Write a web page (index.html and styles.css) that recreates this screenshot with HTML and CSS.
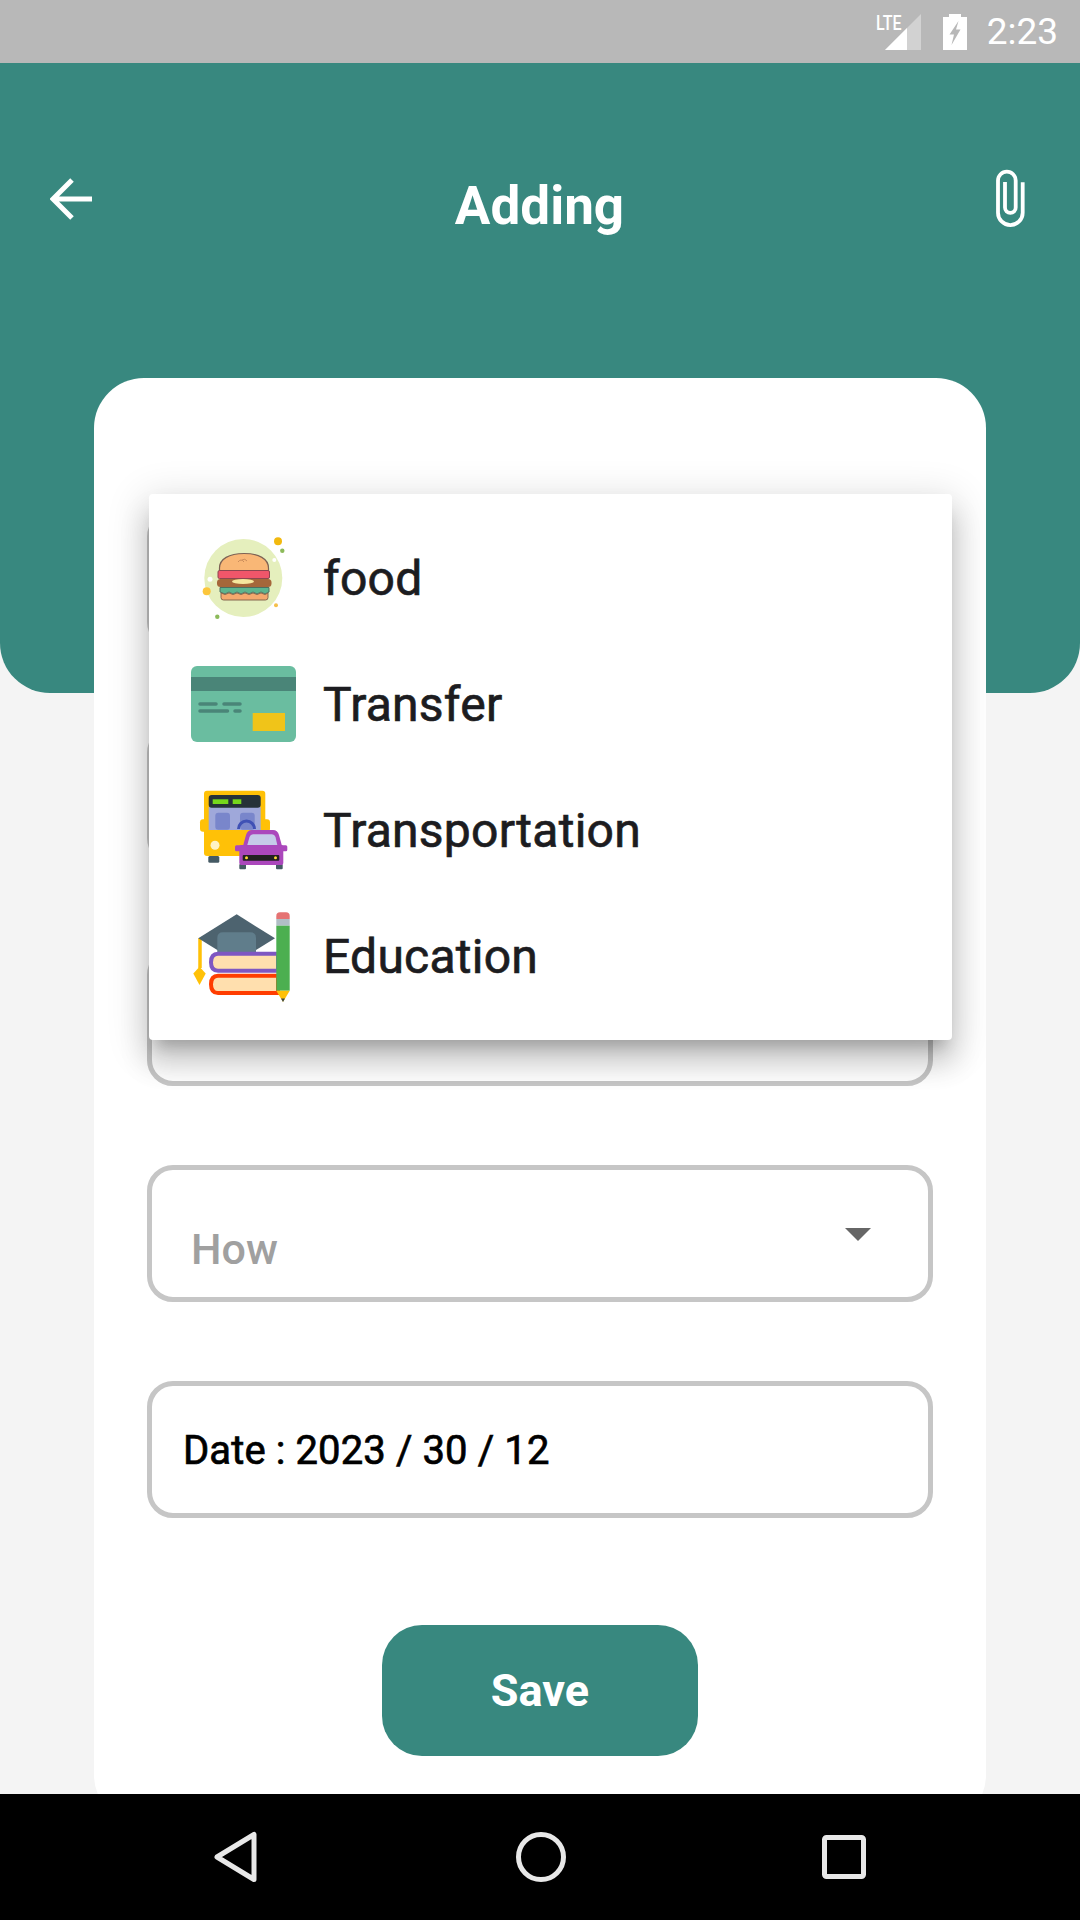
FILE: index.html
```html
<!DOCTYPE html>
<html lang="en">
<head>
    <meta charset="UTF-8">
    <meta name="viewport" content="width=device-width, initial-scale=1.0">
    <title>Adding</title>
    <link rel="stylesheet" href="styles.css">
</head>
<body>
<div class="status-bar">
    <div class="signal">
        <span class="lte">LTE</span>
        <svg class="signal-icon" width="36" height="36" viewBox="0 0 36 36">
            <polygon points="36,0 36,36 0,36" fill="#d2d2d2"/>
            <polygon points="22,14 22,36 0,36" fill="#fff"/>
        </svg>
    </div>
    <svg class="battery" width="24" height="36" viewBox="0 0 24 36">
        <path fill="#fff" fill-rule="evenodd" d="M6 0H18V3H24V36H0V3H6ZM15.500 7L6.500 20.500H11L8.500 31L17.500 15.500H13Z"/>
    </svg>
    <span class="time">2:23</span>
</div>

<div class="screen">
    <header class="top-panel">
        <div class="toolbar">
            <svg class="back" width="42" height="42" viewBox="0 0 42 42">
                <path d="M42 21H3M22 2L3 21L22 40" fill="none" stroke="#fff" stroke-width="5"/>
            </svg>
            <h1 class="title">Adding</h1>
            <svg class="clip" width="38" height="64" viewBox="0 0 38 64">
                <path d="M30.7 15.3V45.7a12.35 12.35 0 0 1-24.7 0V13.5a8.85 8.85 0 0 1 17.7 0V40.6a5.35 5.35 0 0 1-10.7 0V15" fill="none" stroke="#fff" stroke-width="3.8"/>
            </svg>
        </div>
    </header>

    <main class="card">
        <div class="field"></div>
        <div class="field field-wide-gap"></div>
        <div class="field"></div>
        <div class="field">
            <span class="placeholder">How</span>
            <span class="caret"></span>
        </div>
        <div class="field field-date">Date : 2023 / 30 / 12</div>
        <button class="save" type="button">Save</button>

        <ul class="menu">
            <li class="menu-item">
                <svg class="menu-icon" width="108" height="108" viewBox="0 0 108 108">
                    <circle cx="53.3" cy="54" r="39" fill="#e5efbd"/>
                    <circle cx="88" cy="17.3" r="4" fill="#f2b90f"/>
                    <circle cx="92.3" cy="26.7" r="2.2" fill="#8cba5a"/>
                    <circle cx="16.7" cy="67.3" r="4" fill="#fcc63c"/>
                    <circle cx="86" cy="81.3" r="2" fill="#f5c04a"/>
                    <circle cx="27.3" cy="92.7" r="2.2" fill="#8cba5a"/>
                    <circle cx="20" cy="55.3" r="2.5" fill="#fff"/>
                    <circle cx="84.3" cy="36" r="2" fill="#fff"/>
                    <path d="M29.5 47V44C29.5 35 39 29.5 54 29.5S78.5 35 78.5 44V47Z" fill="#f9b776" stroke="#7d6254" stroke-width="1.2"/>
                    <path d="M48 38q3-4 6 0M52 36q3-2 5 1" fill="none" stroke="#c98b5a" stroke-width="1"/>
                    <rect x="28" y="46.5" width="51.500" height="8" rx="1.500" fill="#f0566a" stroke="#8c4650" stroke-width="1"/>
                    <rect x="27" y="55" width="54.500" height="8" rx="3.500" fill="#a5673a"/>
                    <ellipse cx="53" cy="57.500" rx="11" ry="2.500" fill="#f5e79e"/>
                    <path d="M30 63.500H79V68L75 70L71 68L67 70L63 68L59 70L55 68L51 70L47 68L43 70L39 68L35 70L30 68Z" fill="#5cb58e" stroke="#4d6f60" stroke-width="1"/>
                    <path d="M31 69L35 70.500L39 69L43 70.500L47 69L51 70.500L55 69L59 70.500L63 69L67 70.500L71 69L75 70.500L78 69V73.500Q78 76 75.500 76H33.500Q31 76 31 73.500Z" fill="#f5a96d" stroke="#86674f" stroke-width="1"/>
                </svg>
                <span class="menu-label">food</span>
            </li>
            <li class="menu-item">
                <svg class="menu-icon" width="108" height="108" viewBox="0 0 108 108">
                    <rect x="1" y="16" width="105" height="76" rx="6" fill="#6abda0"/>
                    <rect x="1" y="27" width="105" height="14" fill="#4a8578"/>
                    <path d="M10 54H26M34 54H50M10 61H37.500M45 61H50" fill="none" stroke="#4a8578" stroke-width="3.500" stroke-linecap="round"/>
                    <rect x="62.700" y="63" width="32.300" height="18" fill="#f0c419"/>
                </svg>
                <span class="menu-label">Transfer</span>
            </li>
            <li class="menu-item">
                <svg class="menu-icon" width="108" height="108" viewBox="0 0 108 108">
                    <rect x="10" y="43.300" width="70" height="12.400" rx="3" fill="#ffc107"/>
                    <rect x="14" y="14.700" width="61.300" height="65.300" rx="3" fill="#ffc107"/>
                    <rect x="18.700" y="31" width="52" height="23" fill="#9fa8da"/>
                    <rect x="18.700" y="19" width="52" height="12.700" rx="3" fill="#263238"/>
                    <rect x="22.700" y="23.300" width="15.600" height="4.700" fill="#76d81c"/>
                    <rect x="42.700" y="23.300" width="8.600" height="4.700" fill="#76d81c"/>
                    <rect x="25.300" y="36.700" width="14.700" height="17" rx="3" fill="#7986cb"/>
                    <rect x="50" y="36.700" width="14.700" height="17" rx="3" fill="#7986cb"/>
                    <path d="M48.500 53a8 8 0 0 1 16 0" fill="none" stroke="#3f51b5" stroke-width="3"/>
                    <circle cx="25" cy="69.300" r="4.500" fill="#fff3c4"/>
                    <rect x="18.300" y="80" width="11" height="6.700" rx="1.500" fill="#455a64"/>
                    <rect x="49.300" y="88" width="6.700" height="5.300" rx="1" fill="#455a64"/>
                    <rect x="86" y="88" width="6.700" height="5.300" rx="1" fill="#455a64"/>
                    <path d="M53 70L56 59Q57.500 54 62 54H83Q87.500 54 89 59L92 70Z" fill="#ab47bc"/>
                    <rect x="49.300" y="69" width="44" height="20" rx="2" fill="#ab47bc"/>
                    <rect x="45" y="69.300" width="52.300" height="6" rx="1.500" fill="#ab47bc"/>
                    <path d="M57.300 69L59.500 61Q60.500 58.300 63 58.300H82Q84.500 58.300 85.500 61L87.300 69Z" fill="#c5cae9"/>
                    <rect x="52.700" y="79" width="36.600" height="5.700" rx="1" fill="#212121"/>
                    <circle cx="56.500" cy="81.800" r="1.500" fill="#fdd835"/>
                    <circle cx="85.500" cy="81.800" r="1.500" fill="#fdd835"/>
                </svg>
                <span class="menu-label">Transportation</span>
            </li>
            <li class="menu-item">
                <svg class="menu-icon" width="108" height="108" viewBox="0 0 108 108">
                    <path d="M10 36V66" stroke="#ffc107" stroke-width="3.500"/>
                    <polygon points="9.500,64.700 15.700,71.600 9.500,83 3.300,71.600" fill="#ffc107"/>
                    <polygon points="46.700,12.300 85,36.300 46.700,60 8.300,36.300" fill="#4d636f"/>
                    <path d="M27.300 50V36Q27.300 30.300 33 30.300H60Q66 30.300 66 36V50Z" fill="#607d8b"/>
                    <path d="M88 51.700H28Q21 51.700 21 60.200Q21 68.700 28 68.700H88Z" fill="#ffdfae" stroke="#7e57c2" stroke-width="4"/>
                    <path d="M88 73.700H28Q21 73.700 21 82.200Q21 91 28 91H88Z" fill="#ffdfae" stroke="#ff3d00" stroke-width="4"/>
                    <path d="M86.300 17V14Q86.300 10.300 90 10.300H96Q99.700 10.300 99.700 14V17Z" fill="#e57373"/>
                    <rect x="86.300" y="17" width="13.400" height="6.700" fill="#b0bec5"/>
                    <rect x="86.300" y="23.700" width="13.400" height="65" fill="#4caf50"/>
                    <polygon points="86.300,88.700 99.700,88.700 93,100" fill="#ffc107"/>
                    <polygon points="91,96.500 95,96.500 93,100" fill="#37474f"/>
                </svg>
                <span class="menu-label">Education</span>
            </li>
        </ul>
    </main>
</div>

<nav class="nav-bar">
    <svg class="nav-icon" width="46" height="54" viewBox="0 0 46 54">
        <path d="M41 4.500V49.500L4 27Z" fill="none" stroke="#e8e8e8" stroke-width="5" stroke-linejoin="round"/>
    </svg>
    <svg class="nav-icon" width="50" height="50" viewBox="0 0 50 50">
        <circle cx="25" cy="25" r="22.500" fill="none" stroke="#e8e8e8" stroke-width="5"/>
    </svg>
    <svg class="nav-icon" width="44" height="44" viewBox="0 0 44 44">
        <rect x="2.500" y="2.500" width="39" height="39" rx="2" fill="none" stroke="#e8e8e8" stroke-width="5"/>
    </svg>
</nav>
</body>
</html>
```

FILE: styles.css
```css
* {
    box-sizing: border-box;
}

body {
    margin: 0;
    width: 1080px;
    height: 1920px;
    overflow: hidden;
    display: flex;
    flex-direction: column;
    background-color: #f4f4f4;
    font-family: Roboto, "Liberation Sans", sans-serif;
}

/* status bar */
.status-bar {
    height: 63px;
    background-color: #b8b8b8;
    display: flex;
    align-items: center;
    justify-content: flex-end;
    padding-right: 22px;
    color: white;
}

.signal {
    position: relative;
    width: 45px;
    height: 36px;
    margin-right: 22px;
}

.signal-icon {
    position: absolute;
    right: 0;
    top: 0;
}

.lte {
    position: absolute;
    left: 0;
    top: 0;
    font-size: 20px;
    font-weight: 500;
    line-height: 18px;
    transform: scaleX(0.8);
    transform-origin: left center;
}

.battery {
    margin-right: 20px;
}

.time {
    font-size: 37px;
    line-height: 40px;
}

/* main area */
.screen {
    height: 1731px;
    overflow: hidden;
}

.top-panel {
    height: 630px;
    background-color: #38887f;
    border-radius: 0 0 50px 50px;
}

.toolbar {
    display: flex;
    align-items: center;
    justify-content: space-between;
    height: 200px;
    padding: 72px 50px 0 50px;
}

.title {
    margin: 14px 5px 0 0;
    font-size: 53px;
    font-weight: 700;
    color: white;
}

.card {
    position: relative;
    width: 892px;
    height: 1447px;
    margin: -315px 0 0 94px;
    padding: 133px 53px 0;
    background-color: white;
    border-radius: 50px;
    overflow: hidden;
}

.field {
    width: 786px;
    height: 137px;
    margin-bottom: 79px;
    border: 5px solid #c6c6c6;
    border-radius: 26px;
    display: flex;
    align-items: center;
    justify-content: space-between;
    padding: 0 57px 0 39px;
}

.field-wide-gap {
    margin-bottom: 85px;
}

.placeholder {
    margin-top: 30px;
    font-size: 43px;
    font-weight: 500;
    color: #a0a0a0;
}

.caret {
    width: 0;
    height: 0;
    margin-top: 2px;
    border-left: 13px solid transparent;
    border-right: 13px solid transparent;
    border-top: 13px solid #666666;
}

.field-date {
    margin-bottom: 107px;
    padding-left: 31px;
    padding-top: 2px;
    font-size: 40px;
    font-weight: 400;
    letter-spacing: 0.1px;
    color: black;
    -webkit-text-stroke: 0.7px black;
}

.save {
    display: block;
    width: 316px;
    height: 131px;
    margin: 0 auto;
    border: none;
    border-radius: 40px;
    background-color: #38887f;
    color: white;
    font-family: Roboto, "Liberation Sans", sans-serif;
    font-size: 45px;
    font-weight: 700;
}

/* open dropdown */
.menu {
    position: absolute;
    left: 55px;
    top: 116px;
    width: 803px;
    margin: 0;
    padding: 21px 0;
    list-style: none;
    background-color: white;
    border-radius: 4px;
    box-shadow: 0 14px 14px -8px rgba(0, 0, 0, 0.2), 0 22px 28px 3px rgba(0, 0, 0, 0.14), 0 8px 38px 7px rgba(0, 0, 0, 0.12);
}

.menu-item {
    height: 126px;
    display: flex;
    align-items: center;
    gap: 25px;
    padding-left: 41px;
    font-size: 48px;
    font-weight: 400;
    letter-spacing: 0.25px;
    color: #1c1c20;
    -webkit-text-stroke: 0.7px #1c1c20;
}

.nav-bar {
    flex: 1;
    background-color: black;
    display: flex;
    align-items: center;
    justify-content: space-between;
    padding: 0 214px 0 213px;
}
```
